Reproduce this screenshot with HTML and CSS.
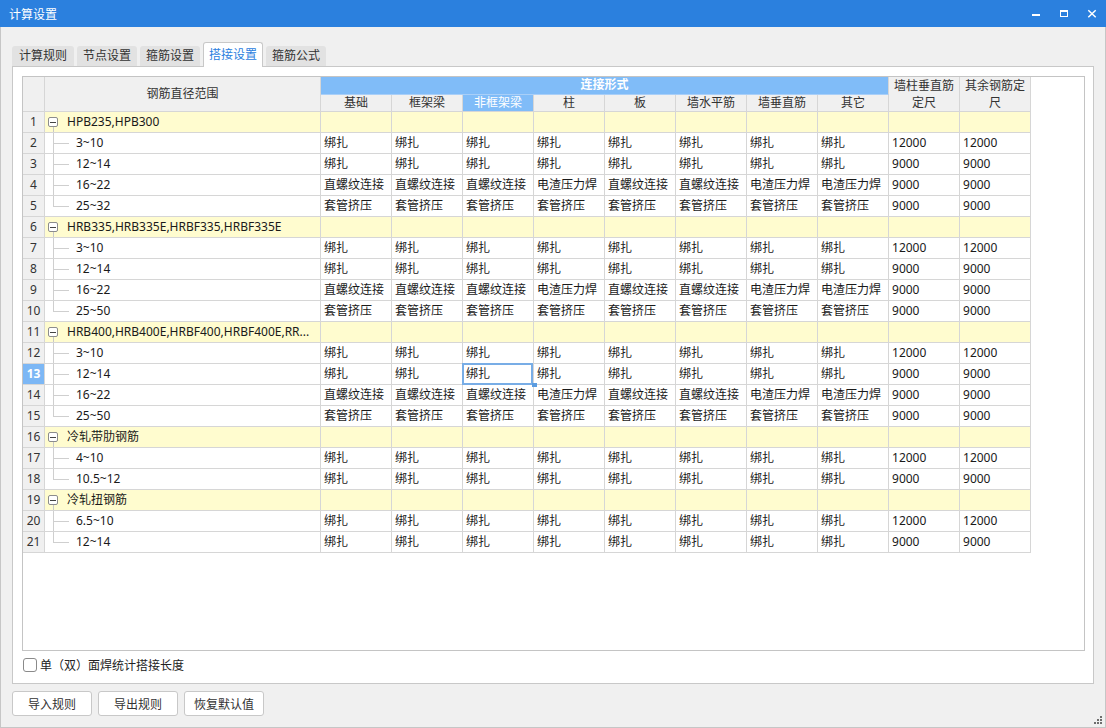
FILE: index.html
```html
<!DOCTYPE html>
<html lang="zh-CN">
<head>
<meta charset="utf-8">
<title>计算设置</title>
<link rel="stylesheet" href="styles.css">
</head>
<body>
<div class="window">
  <header class="titlebar">
    <span class="title">计算设置</span>
    <div class="controls">
      <span class="ctl"><svg width="28" height="27" viewBox="0 0 28 27"><rect x="10" y="14" width="8" height="2" fill="#fff"/></svg></span>
      <span class="ctl"><svg width="28" height="27" viewBox="0 0 28 27"><rect x="10.5" y="10.5" width="7" height="6" fill="none" stroke="#fff" stroke-width="1"/><rect x="10" y="10" width="8" height="2" fill="#fff"/></svg></span>
      <span class="ctl"><svg width="28" height="27" viewBox="0 0 28 27"><path d="M10.3 10.3 L17.7 17.2 M17.7 10.3 L10.3 17.2" stroke="#fff" stroke-width="1.5" fill="none"/></svg></span>
    </div>
  </header>
  <main class="content">
    <nav class="tabs">
      <span class="tab first">计算规则</span>
      <span class="tab">节点设置</span>
      <span class="tab">箍筋设置</span>
      <span class="tab active">搭接设置</span>
      <span class="tab">箍筋公式</span>
    </nav>
    <section class="panel">
      <div class="gridbox">
        <table class="grid">
          <colgroup>
            <col class="c-no"><col class="c-rg">
            <col class="c-v"><col class="c-v"><col class="c-v"><col class="c-v"><col class="c-v">
            <col class="c-v"><col class="c-v"><col class="c-v"><col class="c-v"><col class="c-v">
          </colgroup>
          <thead>
            <tr class="ha">
              <th class="no" rowspan="2"></th>
              <th rowspan="2">钢筋直径范围</th>
              <th class="hl bold" colspan="8">连接形式</th>
              <th class="wrap" rowspan="2">墙柱垂直筋定尺</th>
              <th class="wrap" rowspan="2">其余钢筋定尺</th>
            </tr>
            <tr class="hb">
              <th>基础</th><th>框架梁</th><th class="hl">非框架梁</th><th>柱</th><th>板</th><th>墙水平筋</th><th>墙垂直筋</th><th>其它</th>
            </tr>
          </thead>
          <tbody>
            <tr class="grp"><td class="no">1</td><td class="rg"><span class="tg"></span>HPB235,HPB300</td><td></td><td></td><td></td><td></td><td></td><td></td><td></td><td></td><td></td><td></td></tr>
            <tr><td class="no">2</td><td class="rg ch">3~10</td><td>绑扎</td><td>绑扎</td><td>绑扎</td><td>绑扎</td><td>绑扎</td><td>绑扎</td><td>绑扎</td><td>绑扎</td><td>12000</td><td>12000</td></tr>
            <tr><td class="no">3</td><td class="rg ch">12~14</td><td>绑扎</td><td>绑扎</td><td>绑扎</td><td>绑扎</td><td>绑扎</td><td>绑扎</td><td>绑扎</td><td>绑扎</td><td>9000</td><td>9000</td></tr>
            <tr><td class="no">4</td><td class="rg ch">16~22</td><td>直螺纹连接</td><td>直螺纹连接</td><td>直螺纹连接</td><td>电渣压力焊</td><td>直螺纹连接</td><td>直螺纹连接</td><td>电渣压力焊</td><td>电渣压力焊</td><td>9000</td><td>9000</td></tr>
            <tr><td class="no">5</td><td class="rg ch last">25~32</td><td>套管挤压</td><td>套管挤压</td><td>套管挤压</td><td>套管挤压</td><td>套管挤压</td><td>套管挤压</td><td>套管挤压</td><td>套管挤压</td><td>9000</td><td>9000</td></tr>
            <tr class="grp"><td class="no">6</td><td class="rg"><span class="tg"></span>HRB335,HRB335E,HRBF335,HRBF335E</td><td></td><td></td><td></td><td></td><td></td><td></td><td></td><td></td><td></td><td></td></tr>
            <tr><td class="no">7</td><td class="rg ch">3~10</td><td>绑扎</td><td>绑扎</td><td>绑扎</td><td>绑扎</td><td>绑扎</td><td>绑扎</td><td>绑扎</td><td>绑扎</td><td>12000</td><td>12000</td></tr>
            <tr><td class="no">8</td><td class="rg ch">12~14</td><td>绑扎</td><td>绑扎</td><td>绑扎</td><td>绑扎</td><td>绑扎</td><td>绑扎</td><td>绑扎</td><td>绑扎</td><td>9000</td><td>9000</td></tr>
            <tr><td class="no">9</td><td class="rg ch">16~22</td><td>直螺纹连接</td><td>直螺纹连接</td><td>直螺纹连接</td><td>电渣压力焊</td><td>直螺纹连接</td><td>直螺纹连接</td><td>电渣压力焊</td><td>电渣压力焊</td><td>9000</td><td>9000</td></tr>
            <tr><td class="no">10</td><td class="rg ch last">25~50</td><td>套管挤压</td><td>套管挤压</td><td>套管挤压</td><td>套管挤压</td><td>套管挤压</td><td>套管挤压</td><td>套管挤压</td><td>套管挤压</td><td>9000</td><td>9000</td></tr>
            <tr class="grp"><td class="no">11</td><td class="rg"><span class="tg"></span>HRB400,HRB400E,HRBF400,HRBF400E,RR...</td><td></td><td></td><td></td><td></td><td></td><td></td><td></td><td></td><td></td><td></td></tr>
            <tr><td class="no">12</td><td class="rg ch">3~10</td><td>绑扎</td><td>绑扎</td><td>绑扎</td><td>绑扎</td><td>绑扎</td><td>绑扎</td><td>绑扎</td><td>绑扎</td><td>12000</td><td>12000</td></tr>
            <tr><td class="no cur">13</td><td class="rg ch">12~14</td><td>绑扎</td><td>绑扎</td><td class="sel">绑扎</td><td>绑扎</td><td>绑扎</td><td>绑扎</td><td>绑扎</td><td>绑扎</td><td>9000</td><td>9000</td></tr>
            <tr><td class="no">14</td><td class="rg ch">16~22</td><td>直螺纹连接</td><td>直螺纹连接</td><td>直螺纹连接</td><td>电渣压力焊</td><td>直螺纹连接</td><td>直螺纹连接</td><td>电渣压力焊</td><td>电渣压力焊</td><td>9000</td><td>9000</td></tr>
            <tr><td class="no">15</td><td class="rg ch last">25~50</td><td>套管挤压</td><td>套管挤压</td><td>套管挤压</td><td>套管挤压</td><td>套管挤压</td><td>套管挤压</td><td>套管挤压</td><td>套管挤压</td><td>9000</td><td>9000</td></tr>
            <tr class="grp"><td class="no">16</td><td class="rg"><span class="tg"></span>冷轧带肋钢筋</td><td></td><td></td><td></td><td></td><td></td><td></td><td></td><td></td><td></td><td></td></tr>
            <tr><td class="no">17</td><td class="rg ch">4~10</td><td>绑扎</td><td>绑扎</td><td>绑扎</td><td>绑扎</td><td>绑扎</td><td>绑扎</td><td>绑扎</td><td>绑扎</td><td>12000</td><td>12000</td></tr>
            <tr><td class="no">18</td><td class="rg ch last">10.5~12</td><td>绑扎</td><td>绑扎</td><td>绑扎</td><td>绑扎</td><td>绑扎</td><td>绑扎</td><td>绑扎</td><td>绑扎</td><td>9000</td><td>9000</td></tr>
            <tr class="grp"><td class="no">19</td><td class="rg"><span class="tg"></span>冷轧扭钢筋</td><td></td><td></td><td></td><td></td><td></td><td></td><td></td><td></td><td></td><td></td></tr>
            <tr><td class="no">20</td><td class="rg ch">6.5~10</td><td>绑扎</td><td>绑扎</td><td>绑扎</td><td>绑扎</td><td>绑扎</td><td>绑扎</td><td>绑扎</td><td>绑扎</td><td>12000</td><td>12000</td></tr>
            <tr><td class="no">21</td><td class="rg ch last">12~14</td><td>绑扎</td><td>绑扎</td><td>绑扎</td><td>绑扎</td><td>绑扎</td><td>绑扎</td><td>绑扎</td><td>绑扎</td><td>9000</td><td>9000</td></tr>
          </tbody>
        </table>
      </div>
      <label class="opt"><span class="chk"></span><span>单（双）面焊统计搭接长度</span></label>
    </section>
    <div class="buttons">
      <button class="btn">导入规则</button>
      <button class="btn">导出规则</button>
      <button class="btn">恢复默认值</button>
    </div>
  </main>
  <svg class="grip" width="9" height="9" viewBox="0 0 9 9">
    <rect x="6" y="0" width="2" height="2" fill="#6e6e6e"/>
    <rect x="3" y="3" width="2" height="2" fill="#6e6e6e"/>
    <rect x="6" y="3" width="2" height="2" fill="#6e6e6e"/>
    <rect x="0" y="6" width="2" height="2" fill="#6e6e6e"/>
    <rect x="3" y="6" width="2" height="2" fill="#6e6e6e"/>
    <rect x="6" y="6" width="2" height="2" fill="#6e6e6e"/>
  </svg>
</div>
</body>
</html>
```

FILE: styles.css
```css
* { box-sizing: border-box; }
html, body { margin: 0; padding: 0; }
body {
  width: 1106px;
  height: 728px;
  overflow: hidden;
  background: #f0f0f0;
  font-family: "Noto Sans", "Noto Sans CJK SC", sans-serif;
  font-size: 12px;
  color: #222;
}
.window {
  position: relative;
  width: 1106px;
  height: 728px;
  display: flex;
  flex-direction: column;
}
.titlebar {
  height: 27px;
  flex: none;
  background: #2b80de;
  color: #fff;
  display: flex;
  align-items: center;
}
.title { padding-left: 9px; font-size: 12px; }
.controls { margin-left: auto; display: flex; }
.ctl { width: 28px; height: 27px; display: block; }
.ctl svg { display: block; }

.content {
  flex: 1;
  border: 1px solid #c6c6c6;
  border-top: none;
  padding: 15px 11px 0 11px;
  display: flex;
  flex-direction: column;
}
.tabs {
  height: 24px;
  display: flex;
  align-items: flex-end;
  gap: 3px;
}
.tab {
  height: 20px;
  line-height: 20px;
  padding: 0 6px;
  background: #e2e2e2;
  border-radius: 3px 3px 0 0;
  color: #333;
  white-space: nowrap;
}
.tab.first { padding: 0 7px; }
.tab.active {
  height: 25px;
  line-height: 24px;
  margin-bottom: -1px;
  padding: 0 5px;
  background: #fff;
  border: 1px solid #c8c8c8;
  border-bottom: none;
  color: #2b80de;
  position: relative;
  z-index: 1;
}
.panel {
  background: #fff;
  border: 1px solid #c8c8c8;
  padding: 9px 8px 4px 9px;
}
.gridbox {
  height: 575px;
  border: 1px solid #c4c4c4;
  background: #fff;
  overflow: hidden;
}
.grid {
  border-collapse: separate;
  border-spacing: 0;
  table-layout: fixed;
  width: 1008px;
  font-size: 12px;
}
.c-no { width: 22px; }
.c-rg { width: 276px; }
.c-v { width: 71px; }
.grid th, .grid td {
  border-right: 1px solid #d6d6d6;
  border-bottom: 1px solid #d6d6d6;
  padding: 0 3px;
  white-space: nowrap;
  overflow: hidden;
}
.grid th {
  background: #f0f0f0;
  font-weight: normal;
  color: #333;
  text-align: center;
  line-height: 16px;
  vertical-align: middle;
}
.grid tr.ha, .grid tr.hb { height: 17px; }
.grid th.wrap { white-space: normal; line-height: 17px; }
.grid th.hl { background: #80bcf8; color: #fff; }
.grid th.bold { font-weight: bold; border-bottom-color: #a9cff8; }
.grid tbody tr { height: 21px; }
.grid td { line-height: 20px; color: #1a1a1a; }
.grid td.no {
  background: #f0f0f0;
  text-align: center;
  padding: 0;
  color: #333;
}
.grid td.no.cur { background: #7cb7f5; color: #fff; font-weight: bold; }
.grid tr.grp td { background: #fffccf; }
.grid tr.grp td.no { background: #f0f0f0; }
.grid tr.grp td.rg {
  text-overflow: ellipsis;
  background: linear-gradient(#c8c8c8, #c8c8c8) 8px 100% / 1px 5px no-repeat, #fffccf;
}
.tg {
  display: inline-block;
  width: 10px;
  height: 10px;
  border: 1px solid #8c8c8c;
  border-radius: 2px;
  background: linear-gradient(#444, #444) center / 6px 1px no-repeat, #fff;
  vertical-align: -1px;
  margin-right: 9px;
}
.grid td.ch {
  padding-left: 31px;
  background:
    linear-gradient(#cfcfcf, #cfcfcf) 8px 0 / 1px 100% no-repeat,
    linear-gradient(#cfcfcf, #cfcfcf) 8px 10px / 16px 1px no-repeat;
}
.grid td.ch.last {
  background:
    linear-gradient(#cfcfcf, #cfcfcf) 8px 0 / 1px 11px no-repeat,
    linear-gradient(#cfcfcf, #cfcfcf) 8px 10px / 16px 1px no-repeat;
}
.grid td.sel { position: relative; overflow: visible; }
.grid td.sel::before {
  content: "";
  position: absolute;
  top: -1px;
  left: -1px;
  right: 0;
  bottom: -1px;
  border: 2px solid #78ade6;
}
.grid td.sel::after {
  content: "";
  position: absolute;
  right: -4px;
  bottom: -3px;
  width: 5px;
  height: 4px;
  background: #5b9ce0;
}
.opt {
  height: 28px;
  display: flex;
  align-items: center;
  padding-left: 1px;
  color: #222;
}
.chk {
  width: 14px;
  height: 14px;
  border: 1px solid #8a8a8a;
  border-radius: 3px;
  background: #fff;
  margin-right: 3px;
}
.buttons {
  margin-top: 7px;
  display: flex;
  gap: 6px;
}
.btn {
  width: 80px;
  height: 25px;
  background: #fff;
  border: 1px solid #c8c8c8;
  border-radius: 3px;
  font-family: "Noto Sans", "Noto Sans CJK SC", sans-serif;
  font-size: 12px;
  color: #333;
  padding: 0;
}
.grip {
  position: absolute;
  right: 3px;
  bottom: 3px;
}
```
